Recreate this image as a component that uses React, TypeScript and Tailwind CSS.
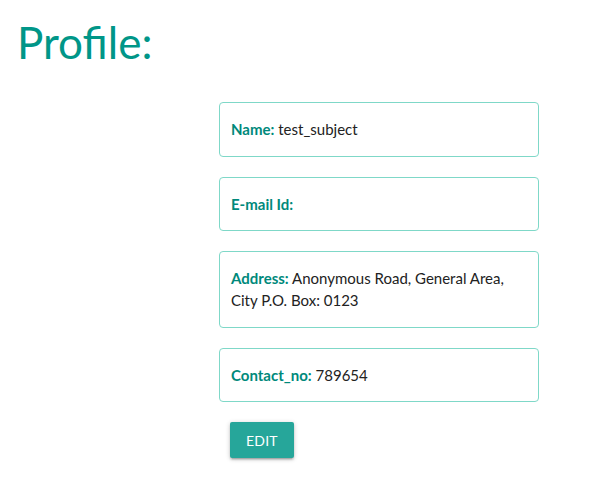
import React from "react";

const font = { fontFamily: 'Lato, "Open Sans", sans-serif' };

function Field({ label, value }: { label: string; value?: string }) {
  return (
    <div className="border border-[#7fd8c8] rounded-[4px] px-[11px] pt-[15px] pb-[15.5px] text-[15px] leading-[22px] text-[#222]">
      <span className="font-bold text-[#00897b]">{label}</span>
      {value ? <span> {value}</span> : null}
    </div>
  );
}

export default function App() {
  return (
    <div className="min-h-[478px] bg-white" style={font}>
      <h1 className="pl-[17px] pt-[18px] text-[44px] leading-[49px] font-normal text-[#009688]">
        Profile:
      </h1>
      <div className="ml-[219px] mt-[35px] w-[320px] flex flex-col gap-[20px]">
        <Field label="Name:" value="test_subject" />
        <Field label="E-mail Id:" />
        <Field label="Address:" value="Anonymous Road, General Area, City P.O. Box: 0123" />
        <Field label="Contact_no:" value="789654" />
        <div className="pl-[11px]">
          <button className="h-[36px] px-[16px] rounded-[2px] bg-[#26a69a] text-white text-[14px] tracking-[0.2px] uppercase shadow-[0_2px_2px_0_rgba(0,0,0,0.14),0_3px_1px_-2px_rgba(0,0,0,0.12),0_1px_5px_0_rgba(0,0,0,0.2)]">
            Edit
          </button>
        </div>
      </div>
    </div>
  );
}
